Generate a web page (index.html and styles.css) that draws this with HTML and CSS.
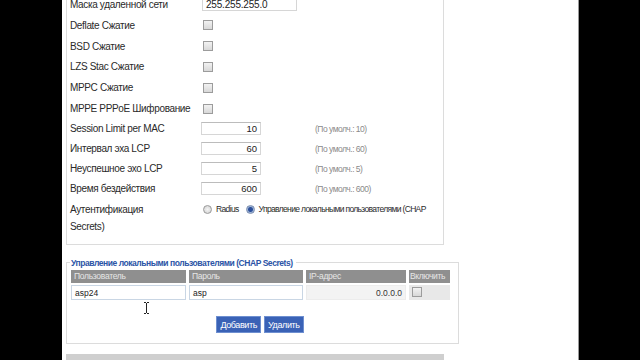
FILE: index.html
```html
<!DOCTYPE html>
<html>
<head>
<meta charset="utf-8">
<link rel="stylesheet" href="styles.css">
</head>
<body>
<div class="page">
  <div class="panel">
    <div class="row first"><span class="lbl">Маска удаленной сети</span><span class="txt wide">255.255.255.0</span></div>
    <div class="row"><span class="lbl">Deflate Сжатие</span><span class="chk"></span></div>
    <div class="row"><span class="lbl">BSD Сжатие</span><span class="chk"></span></div>
    <div class="row"><span class="lbl">LZS Stac Сжатие</span><span class="chk"></span></div>
    <div class="row"><span class="lbl">MPPC Сжатие</span><span class="chk"></span></div>
    <div class="row"><span class="lbl">MPPE PPPoE Шифрование</span><span class="chk"></span></div>
    <div class="row r2"><span class="lbl">Session Limit per MAC</span><span class="txt num">10</span><span class="hint">(По умолч.: 10)</span></div>
    <div class="row r2"><span class="lbl">Интервал эха LCP</span><span class="txt num">60</span><span class="hint">(По умолч.: 60)</span></div>
    <div class="row r2"><span class="lbl">Неуспешное эхо LCP</span><span class="txt num">5</span><span class="hint">(По умолч.: 5)</span></div>
    <div class="row r2"><span class="lbl">Время бездействия</span><span class="txt num">600</span><span class="hint">(По умолч.: 600)</span></div>
    <div class="auth"><div class="aline"><span class="lbl">Аутентификация</span><span class="radio"></span><span class="rtext">Radius</span><span class="radio on"></span><span class="rtext">Управление локальными пользователями (CHAP</span></div><div class="aline">Secrets)</div></div>
  </div>
  <fieldset class="chap">
    <legend>Управление локальными пользователями (CHAP Secrets)</legend>
    <div class="grid">
      <div class="th">Пользователь</div>
      <div class="th">Пароль</div>
      <div class="th">IP-адрес</div>
      <div class="th last">Включить</div>
      <div class="td"><span class="cell-in">asp24</span></div>
      <div class="td"><span class="cell-in">asp</span></div>
      <div class="td ip">0.0.0.0</div>
      <div class="td en"><span class="chk"></span></div>
    </div>
    <div class="btns"><span class="btn">Добавить</span><span class="btn">Удалить</span></div>
    <svg class="cursor" width="7" height="12" viewBox="0 0 7 12"><path d="M1 0.5h2M4 0.5h2M3.5 1v10M1 11.5h2M4 11.5h2" stroke="#222" stroke-width="1" fill="none"/></svg>
  </fieldset>
  <div class="graybar"></div>
</div>
</body>
</html>
```
FILE: styles.css
```css
html, body { margin: 0; padding: 0; background: #000; height: 100%; overflow: hidden; }
body { font-family: "Liberation Sans", Arial, sans-serif; font-size: 10px; color: #2a2a2a; }
.page {
  position: relative;
  margin-left: 62px;
  width: 517px;
  height: 360px;
  background: #fff;
  border-right: 1px solid #9a9a9a;
  padding-left: 4px;
  box-sizing: border-box;
  overflow: hidden;
}
.panel {
  width: 378px;
  margin-top: -7px;
  border: 1px solid #dcdcdc;
  border-top: none;
  padding-left: 3px;
  padding-bottom: 9px;
  box-sizing: border-box;
}
.row { display: flex; align-items: center; height: 20.8px; }
.row.r2 { height: 20px; }
.row.first { height: 22px; }
.lbl { display: inline-block; width: 131px; flex: none; white-space: nowrap; letter-spacing: -0.35px; }
.txt {
  display: inline-block; height: 13px; line-height: 12px; box-sizing: border-box;
  border: 1px solid #d6d6d6; border-top-color: #bcbcbc; background: #fff; padding: 0 3px; color: #222;
}
.wide { width: 95px; margin-left: 1px; height: 13px; line-height: 12px; margin-top: 1px; border-top-color: #d6d6d6; letter-spacing: -0.2px; }
.num { width: 60px; text-align: right; font-size: 9.5px; }
.hint { margin-left: 54px; color: #8a8a8a; font-size: 8.5px; letter-spacing: -0.5px; }
.chk {
  display: inline-block; width: 10px; height: 10px; box-sizing: border-box; margin-left: 2px;
  border: 1px solid #9c9c9c; background: linear-gradient(#f2f2f2, #d8d8d8);
}
.auth { padding-top: 2px; letter-spacing: -0.35px; }
.aline { display: flex; align-items: center; height: 17px; white-space: nowrap; }
.radio {
  display: inline-block; flex: none; width: 7px; height: 7px; border-radius: 50%;
  border: 1px solid #9a9a9a; background: radial-gradient(#f4f4f4, #cfcfcf);
  margin-left: 2px; margin-right: 4px;
}
.rtext { font-size: 8.5px; letter-spacing: -0.65px; }
.radio.on { background: radial-gradient(#2c4f9a 0 2px, #9fb6d8 3px); border-color: #7d8fb0; margin-left: 7px; }
.chap {
  position: relative;
  width: 393px;
  margin: 13px 0 0 0;
  padding: 2px 7px 4px 4px;
  border: 1px solid #dcdcdc;
  box-sizing: border-box;
  height: 86px;
  font-size: 8.5px;
}
.chap legend {
  padding: 0 3px 0 1px; margin-left: -1px;
  color: #2b54a6; font-weight: bold; font-size: 8.5px; letter-spacing: -0.45px;
}
.grid {
  display: grid;
  grid-template-columns: 115px 114px 100px 41px;
  column-gap: 3px;
  row-gap: 2px;
}
.th { height: 13px; line-height: 13px; background: #8f8f8f; color: #e6e6e6; padding-left: 3px; letter-spacing: -0.3px; overflow: hidden; white-space: nowrap; }
.th.last { padding-left: 1px; letter-spacing: -0.4px; }
.td { height: 15px; }
.cell-in {
  display: block; height: 15px; line-height: 14px; box-sizing: border-box; padding-left: 3px;
  border: 1px solid #c9d6e4; background: #fff; color: #222;
}
.ip { background: #f3f3f3; text-align: right; padding-right: 3px; line-height: 15px; color: #333; border: 1px solid #ececec; box-sizing: border-box; }
.en { background: #e8e8e8; display: flex; align-items: center; }
.en .chk { margin-left: 3px; }
.btns { display: flex; justify-content: center; gap: 3px; margin-top: 16px; padding-right: 2px; }
.btn {
  display: inline-block; height: 17px; line-height: 16px; padding: 0 3px;
  background: #3a62b6; color: #fff; border: 1px solid #6e8fd0; box-sizing: border-box; letter-spacing: -0.4px; font-size: 9px;
}
.cursor { position: absolute; left: 76px; top: 34px; }
.graybar { width: 378px; height: 10px; background: #cfcfcf; margin-top: 10px; }
```
